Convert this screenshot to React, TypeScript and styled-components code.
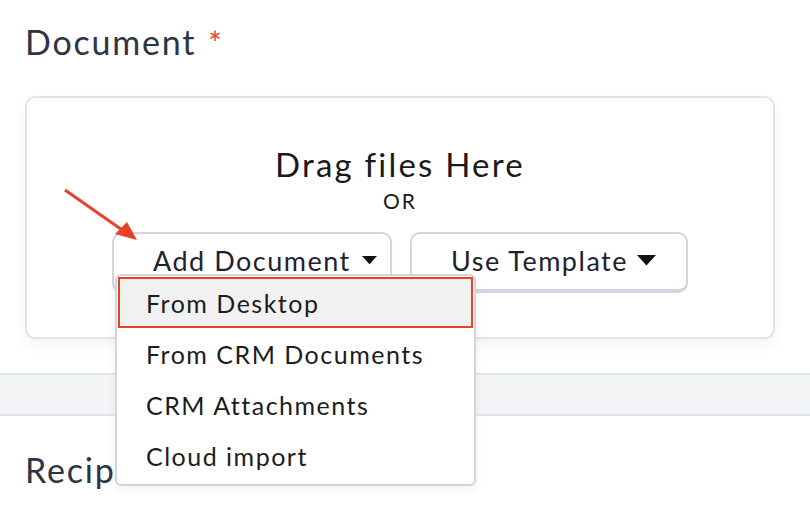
import styled, { createGlobalStyle } from "styled-components";

const GlobalStyle = createGlobalStyle`
  html, body {
    margin: 0;
    padding: 0;
    background: #fff;
    font-family: Lato, "Open Sans", sans-serif;
  }
  * {
    box-sizing: border-box;
  }
`;

const menuItems = ["From Desktop", "From CRM Documents", "CRM Attachments", "Cloud import"];

const Caret = ({ size }: { size: number }) => (
  <svg width={size} height={size * 0.55} viewBox="0 0 20 11">
    <path d="M0 0 H20 L10 11 Z" fill="#111" />
  </svg>
);

export default function App() {
  return (
    <Page>
      <GlobalStyle />
      <Section>
        <Heading>
          Document<Required>*</Required>
        </Heading>
        <DropZone>
          <DragText>Drag files Here</DragText>
          <OrText>OR</OrText>
          <ButtonRow>
            <DropdownWrap>
              <Button $width={280} $padLeft={39} $gap={11}>
                Add Document <Caret size={15} />
              </Button>
              <Menu>
                {menuItems.map((item, i) => (
                  <MenuItem key={item} $active={i === 0}>
                    {item}
                  </MenuItem>
                ))}
              </Menu>
            </DropdownWrap>
            <Button $width={278} $padLeft={39} $gap={9}>
              Use Template <Caret size={19} />
            </Button>
          </ButtonRow>
        </DropZone>
      </Section>
      <Band />
      <Section>
        <Heading $top={30}>Recipients</Heading>
      </Section>
      <Arrow width="80" height="60" viewBox="0 0 80 60">
        <line x1="2" y1="2" x2="62" y2="44" stroke="#e8412a" strokeWidth="3" />
        <path d="M74 52 L52 46 L64 34 Z" fill="#e8412a" />
      </Arrow>
    </Page>
  );
}

const Page = styled.div`
  position: relative;
  width: 810px;
  height: 524px;
  overflow: hidden;
`;

const Section = styled.section`
  padding: 0 35px 0 25px;
`;

const Heading = styled.h2<{ $top?: number }>`
  margin: 0;
  padding-top: ${(p) => p.$top ?? 18}px;
  font-size: 34px;
  font-weight: 400;
  line-height: 48px;
  color: #2e3446;
  letter-spacing: 1.8px;
`;

const Required = styled.span`
  margin-left: 12px;
  color: #e8412a;
  font-size: 32px;
`;

const DropZone = styled.div`
  margin-top: 29px;
  height: 243px;
  border: 2px solid #dde4ee;
  border-radius: 10px;
  box-shadow: 0 6px 14px rgba(30, 40, 60, 0.05);
  display: flex;
  flex-direction: column;
  align-items: center;
  padding-top: 47px;
`;

const DragText = styled.div`
  font-size: 33px;
  line-height: 38px;
  color: #1a1a1a;
  letter-spacing: 2.2px;
`;

const OrText = styled.div`
  margin-top: 5px;
  font-size: 21px;
  line-height: 26px;
  color: #1a1a1a;
  letter-spacing: 2px;
`;

const ButtonRow = styled.div`
  margin-top: 18px;
  display: flex;
  gap: 18px;
`;

const DropdownWrap = styled.div`
  position: relative;
`;

const Button = styled.div<{ $width: number; $padLeft: number; $gap: number }>`
  width: ${(p) => p.$width}px;
  height: 61px;
  padding-left: ${(p) => p.$padLeft}px;
  padding-bottom: 2px;
  border: 2px solid #d2d4df;
  border-bottom-width: 4px;
  border-radius: 10px;
  background: #fff;
  display: flex;
  align-items: center;
  gap: ${(p) => p.$gap}px;
  font-size: 27px;
  color: #1e2230;
  letter-spacing: 1.5px;
  white-space: nowrap;
`;

const Menu = styled.div`
  position: absolute;
  top: 42px;
  left: 3px;
  width: 361px;
  padding: 1px 1px 3px;
  background: #fff;
  border: 2px solid #d5d5d8;
  border-radius: 6px;
  box-shadow: 0 4px 10px rgba(0, 0, 0, 0.06);
  z-index: 2;
`;

const MenuItem = styled.div<{ $active?: boolean }>`
  height: 51px;
  display: flex;
  align-items: center;
  padding-left: ${(p) => (p.$active ? 26 : 28)}px;
  font-size: 25px;
  color: #1c1c1c;
  letter-spacing: 1.5px;
  white-space: nowrap;
  background: ${(p) => (p.$active ? "#f1f1f1" : "#fff")};
  border: ${(p) => (p.$active ? "2px solid #e8412a" : "none")};
`;

const Band = styled.div`
  margin-top: 34px;
  height: 43px;
  background: #f3f4f6;
  border-top: 2px solid #dfe6ee;
  border-bottom: 2px solid #dfe6ee;
`;

const Arrow = styled.svg`
  position: absolute;
  left: 63px;
  top: 188px;
`;
